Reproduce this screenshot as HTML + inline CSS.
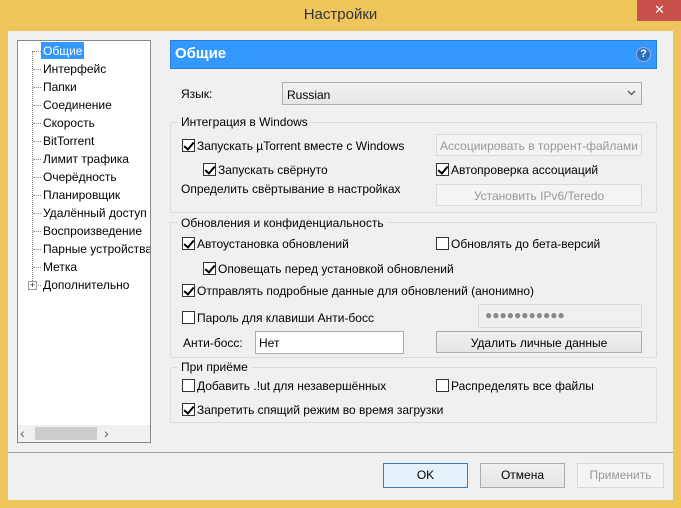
<!DOCTYPE html><html><head><meta charset="utf-8"><style>
*{margin:0;padding:0;box-sizing:border-box}
body{width:681px;height:508px;background:#efc65c;font-family:"Liberation Sans",sans-serif;font-size:12px;color:#000;position:relative;overflow:hidden}
.a{position:absolute;white-space:nowrap}
.client{position:absolute;left:8px;top:31px;width:665px;height:469px;background:#f0f0f0}
.cb{position:absolute;width:13px;height:13px;border:1px solid #333;background:#fff}
.cb.on::after{content:"";position:absolute;left:3px;top:0px;width:4px;height:8px;border:solid #000;border-width:0 2px 2px 0;transform:rotate(40deg)}
.btn{position:absolute;border:1px solid #acacac;background:linear-gradient(#f0f0f0,#e5e5e5);text-align:center;line-height:22px;white-space:nowrap}
.grp{position:absolute;border:1px solid #dcdcdc;border-radius:2px}
.gt{position:absolute;background:#f0f0f0;padding:0 3px;white-space:nowrap}
.ti{position:absolute;left:43px;height:16px;line-height:16px;white-space:nowrap}
.dot{position:absolute;left:33px;width:8px;border-top:1px dotted #888}
</style></head><body>
<div class="a" style="left:0;top:6px;width:681px;text-align:center;font-size:15px;color:#333">Настройки</div>
<div class="a" style="left:637px;top:0;width:45px;height:21px;background:#c7504a;color:#fff;text-align:center;line-height:20px;font-size:13px">✕</div>
<div class="client"></div>
<!-- tree -->
<div class="a" style="left:17px;top:40px;width:134px;height:403px;background:#fff;border:1px solid #828790;overflow:hidden">
</div>
<div class="a" style="left:32px;top:51px;height:234px;border-left:1px dotted #888"></div>
<div class="a" style="left:41px;top:42px;width:43px;height:17px;background:#3399ff"></div>
<div class="dot" style="top:51px"></div><div class="ti" style="top:43px;color:#fff">Общие</div>
<div class="dot" style="top:69px"></div><div class="ti" style="top:61px">Интерфейс</div>
<div class="dot" style="top:87px"></div><div class="ti" style="top:79px">Папки</div>
<div class="dot" style="top:105px"></div><div class="ti" style="top:97px">Соединение</div>
<div class="dot" style="top:123px"></div><div class="ti" style="top:115px">Скорость</div>
<div class="dot" style="top:141px"></div><div class="ti" style="top:133px">BitTorrent</div>
<div class="dot" style="top:159px"></div><div class="ti" style="top:151px">Лимит трафика</div>
<div class="dot" style="top:177px"></div><div class="ti" style="top:169px">Очерёдность</div>
<div class="dot" style="top:195px"></div><div class="ti" style="top:187px">Планировщик</div>
<div class="dot" style="top:213px"></div><div class="ti" style="top:205px">Удалённый доступ</div>
<div class="dot" style="top:231px"></div><div class="ti" style="top:223px">Воспроизведение</div>
<div class="ti" style="top:241px;width:107px;overflow:hidden">Парные устройства</div><div class="dot" style="top:249px"></div>
<div class="dot" style="top:267px"></div><div class="ti" style="top:259px">Метка</div>
<div class="dot" style="top:285px"></div><div class="ti" style="top:277px">Дополнительно</div>
<div class="a" style="left:28px;top:281px;width:9px;height:9px;border:1px solid #999;background:#fff;font-size:9px;line-height:7px;text-align:center;color:#333">+</div>
<div class="a" style="left:18px;top:425px;width:132px;height:17px;background:#f0f0f0"></div>
<div class="a" style="left:35px;top:427px;width:62px;height:13px;background:#cdcdcd"></div>
<div class="a" style="left:20px;top:425px;color:#666;font-size:14px;line-height:16px">‹</div>
<div class="a" style="left:104px;top:425px;color:#666;font-size:14px;line-height:16px">›</div>
<!-- header -->
<div class="a" style="left:170px;top:40px;width:487px;height:29px;background:#3399ff;border:1px solid #2a7fd4"></div>
<div class="a" style="left:175px;top:45px;color:#fff;font-weight:bold;font-size:15px">Общие</div>
<div class="a" style="left:636px;top:47px;width:15px;height:15px;border-radius:50%;background:#2d6fc0;border:1px solid #aac;color:#fff;font-size:11px;text-align:center;line-height:13px;font-weight:bold">?</div>
<div class="a" style="left:181px;top:87px">Язык:</div>
<div class="a" style="left:282px;top:82px;width:360px;height:23px;border:1px solid #acacac;background:linear-gradient(#f2f2f2,#e6e6e6);padding:5px 0 0 4px">Russian</div>
<svg class="a" style="left:627px;top:90px" width="9" height="6"><path d="M1 1L4.5 4.5L8 1" stroke="#555" stroke-width="1.3" fill="none"/></svg>
<!-- group1 -->
<div class="grp" style="left:170px;top:122px;width:487px;height:91px"></div>
<div class="gt" style="left:178px;top:115px">Интеграция в Windows</div>
<div class="cb on" style="left:182px;top:139px"></div><div class="a" style="left:197px;top:139px">Запускать µTorrent вместе с Windows</div>
<div class="btn" style="left:436px;top:134px;width:206px;height:22px;color:#999;background:#f4f4f4;border-color:#dadada">Ассоциировать в торрент-файлами</div>
<div class="cb on" style="left:203px;top:163px"></div><div class="a" style="left:218px;top:163px">Запускать свёрнуто</div>
<div class="cb on" style="left:436px;top:163px"></div><div class="a" style="left:451px;top:163px">Автопроверка ассоциаций</div>
<div class="a" style="left:181px;top:182px">Определить свёртывание в настройках</div>
<div class="btn" style="left:436px;top:184px;width:206px;height:22px;color:#999;background:#f4f4f4;border-color:#dadada">Установить IPv6/Teredo</div>
<!-- group2 -->
<div class="grp" style="left:170px;top:222px;width:487px;height:136px"></div>
<div class="gt" style="left:178px;top:216px">Обновления и конфиденциальность</div>
<div class="cb on" style="left:182px;top:237px"></div><div class="a" style="left:197px;top:237px">Автоустановка обновлений</div>
<div class="cb" style="left:436px;top:237px"></div><div class="a" style="left:451px;top:237px">Обновлять до бета-версий</div>
<div class="cb on" style="left:203px;top:262px"></div><div class="a" style="left:218px;top:262px">Оповещать перед установкой обновлений</div>
<div class="cb on" style="left:182px;top:284px"></div><div class="a" style="left:197px;top:284px">Отправлять подробные данные для обновлений (анонимно)</div>
<div class="cb" style="left:182px;top:311px"></div><div class="a" style="left:197px;top:311px">Пароль для клавиши Анти-босс</div>
<div class="a" style="left:478px;top:304px;width:164px;height:24px;border:1px solid #dadada;background:#f0f0f0;padding:3px 0 0 6px;color:#888">●●●●●●●●●●●</div>
<div class="a" style="left:183px;top:336px">Анти-босс:</div>
<div class="a" style="left:255px;top:331px;width:149px;height:23px;border:1px solid #abadb3;background:#fff;padding:4px 0 0 3px">Нет</div>
<div class="btn" style="left:436px;top:331px;width:206px;height:22px">Удалить личные данные</div>
<!-- group3 -->
<div class="grp" style="left:170px;top:367px;width:487px;height:56px"></div>
<div class="gt" style="left:178px;top:360px">При приёме</div>
<div class="cb" style="left:182px;top:379px"></div><div class="a" style="left:197px;top:379px">Добавить .!ut для незавершённых</div>
<div class="cb" style="left:436px;top:379px"></div><div class="a" style="left:451px;top:379px">Распределять все файлы</div>
<div class="cb on" style="left:182px;top:403px"></div><div class="a" style="left:197px;top:403px">Запретить спящий режим во время загрузки</div>
<!-- bottom -->
<div class="a" style="left:8px;top:452px;width:665px;border-top:1px solid #a0a0a0"></div>
<div class="btn" style="left:383px;top:463px;width:85px;height:25px;line-height:23px;border-color:#3c7fb1;background:#e5f1fb">OK</div>
<div class="btn" style="left:480px;top:463px;width:85px;height:25px;line-height:23px">Отмена</div>
<div class="btn" style="left:577px;top:463px;width:87px;height:25px;line-height:23px;color:#999;background:#f4f4f4;border-color:#dadada">Применить</div>
</body></html>
